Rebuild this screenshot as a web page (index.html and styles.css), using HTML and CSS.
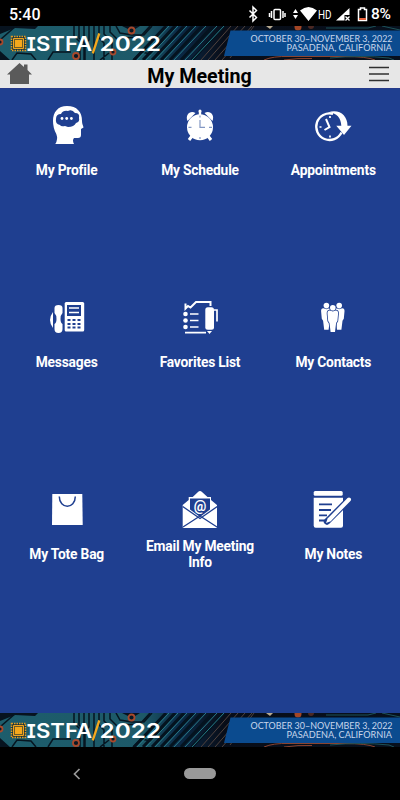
FILE: index.html
```
<!DOCTYPE html>
<html lang="en">
<head>
<meta charset="utf-8">
<title>My Meeting</title>
<link rel="stylesheet" href="styles.css">
</head>
<body>
<header class="status">
  <span class="time">5:40</span>
  <svg class="status-icons" viewBox="0 0 122 27" width="122" height="27">
    <path d="M1.500 9.500l7 7-3.500 3.500V6l3.500 3.500-7 7" fill="none" stroke="#fff" stroke-width="1.500"/>
    <g fill="none" stroke="#fff" stroke-width="1.500"><rect x="26" y="8.500" width="6.500" height="10" rx="1"/><path d="M23.500 10v7M21.500 12v4M35 10v7M37 12v4"/></g>
    <path d="M45 12l2.500-4 2.500 4zM45 14l2.500 4 2.500-4zM52 9.500q8.500-7 17 0L60.500 20z" fill="#fff"/>
    <text x="70" y="17.500" class="hd" textLength="13.500" lengthAdjust="spacingAndGlyphs">HD</text>
    <path d="M88 19.500L101.500 7v7h-5v5.500z" fill="#fff"/><path d="M97.500 15.500l4 4m0-4l-4 4" stroke="#fff" stroke-width="1.300"/>
    <path d="M110.500 8.500h2V7h4v1.500h2v11h-8z" fill="none" stroke="#fff" stroke-width="1.500"/><path d="M111 17h7v2h-7z" fill="#e8623c"/>
  </svg>
  <span class="battery">8%</span>
</header>

<svg class="banner" viewBox="0 0 400 34" width="400" height="34" preserveAspectRatio="none">
  <defs>
    <linearGradient id="board" x2="1" y2="0">
      <stop offset="0" stop-color="#1d5d6c"/><stop offset=".36" stop-color="#1d5968"/><stop offset=".45" stop-color="#0a2845"/><stop offset=".56" stop-color="#080d18"/><stop offset="1" stop-color="#07101d"/>
    </linearGradient>
    <g id="banner-art">
      <path d="M0 0h400v34H0z" fill="url(#board)"/>
      <path d="M0 0h38l-3 3-20-1L0 8zM0 25l10 9H0zM122 0h18l-8 5z" fill="#07131f"/>
      <g fill="none" stroke="#061520" stroke-width="1.500">
        <path d="M74 0v10l6 6v18M79 0v12l6 6v16M84 0v34M89 0v14l-4 4v16M94 0v34M99 0v12l5 5v17M104 0v8l8 8v18M110 0v6l8 8M116 0l4 7 12 2h12l8-9M133 34l8-8 10 2 16-18 8-10M0 14l16-14M48 34l5-8h18M122 12l18-1 10-11M100 34l9-7M12 34l5-7 14 1 5 6"/>
      </g>
      <g fill="none" stroke="#04131f" stroke-width="3"><path d="M134 34l32-34M143 34l32-34M152 34l32-34M161 34l32-34M170 34l32-34M181 34l32-34M192 34l32-34"/></g>
      <g fill="none" stroke="#287b88" stroke-width="1"><path d="M137 34l32-34M146 34l32-34M155 34l32-34M164 34l32-34M174 34l32-34M185 34l32-34M192 34l32-34"/></g>
      <g fill="none" stroke="#51433e" stroke-width="1"><path d="M201 34l30-34M208 34l30-34M215 34l30-34M222 34l30-34M230 32l24-32"/></g>
      <path d="M264 34q9-4 25-3.500h55q23 0 31 3.500M284 34q14-2 28-1.500" fill="none" stroke="#8a4430"/>
      <path d="M330 32q31-3 59 0l5 2M326 2h42l8-2M382 0l18 4" fill="none" stroke="#1d5259"/>
      <path d="M266 0h7l-3 3z" fill="#b8aa91"/>
      <g fill="#091825" stroke="#a8492c" stroke-width="1.800"><circle cx="131.500" cy="4.500" r="3"/><circle cx="76" cy="30" r="3"/><circle cx="113" cy="26" r="2.500"/><circle cx="0" cy="16" r="2.500"/></g>
      <circle cx="298" cy="1" r="3.500" fill="#a34625"/><circle cx="311" cy="0" r="3" fill="#4b2823"/>
      <path d="M230.500 4.500H400V30H224z" fill="#0b4b8f"/>
      <path d="M11.500 10.500h14v14h-14z" fill="#17323b" stroke="#e59b22" stroke-width="1.500" stroke-dasharray="1.500 1"/>
      <path d="M13.500 12.500h10v10h-10z" fill="#6b5a28" stroke="#f0a51f"/><path d="M15 14h7v7h-7z" fill="#f5a81c"/>
      <path d="M92.800 27.300L99.300 7.300" stroke="#f5a81c" stroke-width="2.300"/>
      <g class="wordmark">
        <text x="26" y="24.700" class="mono" textLength="10.500" lengthAdjust="spacingAndGlyphs">I</text>
        <text x="36" y="24.700" textLength="56" lengthAdjust="spacingAndGlyphs">STFA</text>
        <text x="99.500" y="24.700" textLength="61.500" lengthAdjust="spacingAndGlyphs">2022</text>
      </g>
      <g class="event">
        <text x="250.500" y="15.500" textLength="142" lengthAdjust="spacingAndGlyphs">OCTOBER 30–NOVEMBER 3, 2022</text>
        <text x="286.500" y="25" textLength="105.500" lengthAdjust="spacingAndGlyphs">PASADENA, CALIFORNIA</text>
      </g>
    </g>
  </defs>
  <use href="#banner-art"/>
</svg>

<div class="titlebar">
  <svg width="26" height="24" viewBox="0 0 26 24"><path d="M0 12.500L12.500 1l4.500 4V2.500h3.500V8l4.500 4.500h-3V22H3v-9.500z" fill="#5a5a5a"/></svg>
  <h1>My Meeting</h1>
  <svg width="20" height="24" viewBox="0 0 20 24"><path d="M0 5.500h20M0 12h20M0 18.500h20" stroke="#303030" stroke-width="1.500"/></svg>
</div>

<main class="grid">
  <a class="tile">
    <svg class="icon" viewBox="0 0 44 44"><path d="M10.300 41q3-5 1-10Q8 25 8 18C8 9 13 3 22 3c10 0 15 6 15 15 0 3 1 4 1.500 6.500L36 26v6q0 3-3 3h-4q-2 2 0 6z" fill="#fff"/><path d="M15 22q-5-1-4-6 0-5 5-5 2-4 7-3 4-2 7 2 5 0 4 5 1 4-3 5-2 4-8 4l-3-1q-4 1-5-1z" fill="#1f3f90"/><g fill="#fff"><circle cx="17" cy="15.500" r="1.400"/><circle cx="21.700" cy="15.500" r="1.400"/><circle cx="26.400" cy="15.500" r="1.400"/></g></svg>
    <span class="label">My Profile</span>
  </a>
  <a class="tile">
    <svg class="icon" viewBox="0 0 44 44"><g fill="#fff"><circle cx="22" cy="24.300" r="13"/><path d="M9.500 18C7 12 12 7 17.500 10zM34.500 18C37 12 32 7 26.500 10zM20.800 8h2.400v4h-2.400z"/><circle cx="22" cy="8" r="1.500"/><path d="M14 33l-3 4M30 33l3 4" stroke="#fff" stroke-width="3"/></g><path d="M22 17v7.300h5M22 12.500v2M22 34v2M10.500 24.300h3M31 24.300h3" fill="none" stroke="#8297c3" stroke-width="1.200"/></svg>
    <span class="label">My Schedule</span>
  </a>
  <a class="tile">
    <svg class="icon" viewBox="0 0 44 44"><path d="M22 10.800a13.300 13.300 0 1 0 8.500 18.700" fill="none" stroke="#fff" stroke-width="2.300"/><path d="M17 9.500c11-4 19.500 3 19.500 13.200h4L33 32l-7.700-9.300h5C30 15 26 9.500 17 9.500z" fill="#fff"/><path d="M15 16l3.500 8-5 3" fill="none" stroke="#fff" stroke-width="2"/><path d="M19 13v2M19 32.500v2M8.500 24h2" stroke="#fff" stroke-width="1.700"/></svg>
    <span class="label">Appointments</span>
  </a>
  <a class="tile">
    <svg class="icon" viewBox="0 0 44 44"><rect x="19.700" y="7" width="19.500" height="29.500" rx="1.500" fill="#fff"/><path d="M22 10h14v11H22z" fill="#1f3f90"/><path d="M24 13h10M24 17.500h10" stroke="#fff" stroke-width="1.500"/><path d="M22.500 25h13M22.500 29h13M22.500 32.500h13" stroke="#1f3f90" stroke-width="2" stroke-dasharray="3 2"/><path d="M9.500 13q0-3 4-3t4 3v5q-2 2-2 6t2 5v5q0 4-4 4t-4-4v-5q2-1 2-5t-2-6z" fill="#fff"/><path d="M8 17v16q-6-8 0-16z" fill="#fff"/></svg>
    <span class="label">Messages</span>
  </a>
  <a class="tile">
    <svg class="icon" viewBox="0 0 44 44"><path d="M7.500 8.500v5l2.500-2.500 2.500 1.500L18 7h14.500v4" fill="none" stroke="#fff" stroke-width="2"/><g fill="#fff"><circle cx="7.500" cy="19" r="2.300"/><circle cx="7.500" cy="25.500" r="2.300"/><circle cx="7.500" cy="32" r="2.300"/><rect x="27.300" y="12.300" width="8.700" height="22.500" rx="2.500"/><path d="M29 36h5l-2.500 3z"/></g><path d="M12 19h8.500M12 25.500h8.500M12 32h8.500M7 37.700h21M36 15h3v11.500" fill="none" stroke="#fff" stroke-width="1.700"/></svg>
    <span class="label">Favorites List</span>
  </a>
  <a class="tile">
    <svg class="icon" viewBox="0 0 44 44"><defs><g id="person"><circle cy="-8.700" r="2.800"/><path d="M-3-6L0-5l3-1q2.500 0 2.300 3L4.600 4.500 3.300 6.500 2.200 15.500h-4.400L-3.300 6.500-4.600 4.500-5.300-3Q-5.500-6-3-6z"/></g></defs><g fill="#fff"><use href="#person" x="15.400" y="19.300"/><use href="#person" x="28.200" y="19.300"/><use href="#person" x="21.800" y="21.500" stroke="#1f3f90" stroke-width="1.600"/><use href="#person" x="21.800" y="21.500"/></g></svg>
    <span class="label">My Contacts</span>
  </a>
  <a class="tile">
    <svg class="icon" viewBox="0 0 44 44"><path d="M7.300 7h30l.4 31H7z" fill="#fff"/><path d="M14.300 9.500c0 13 16 13 16 0" fill="none" stroke="#1f3f90" stroke-width="1.500"/></svg>
    <span class="label">My Tote Bag</span>
  </a>
  <a class="tile">
    <svg class="icon" viewBox="0 0 44 44"><path d="M4.700 18l6-5V10h4L20 5q2-2 4 0l5.500 5H33v3l6 5v22q0 1-1 1H5.700q-1 0-1-1z" fill="#fff"/><path d="M12 11.500h20v11L22 30l-10-7.500z" fill="#1f3f90"/><text x="22" y="23.500" class="at">@</text><path d="M4.700 19.500L22 31.500l17.300-12M5 40l17-11 17 11" fill="none" stroke="#1f3f90" stroke-width="1.300"/></svg>
    <span class="label">Email My Meeting<br>Info</span>
  </a>
  <a class="tile">
    <svg class="icon" viewBox="0 0 44 44"><g fill="#fff"><rect x="2.700" y="4" width="29" height="4.700" rx="1.500"/><path d="M2.700 10.700H32v28q0 2-2 2H4.700q-2 0-2-2z"/></g><path d="M8 17.300h13M8 23h12M8 28.300h8M8 33.500h7" stroke="#1f3f90" stroke-width="1.800"/><path d="M38 12.500L19 31.500l-3 3" fill="none" stroke="#1f3f90" stroke-width="6.500" stroke-linecap="round"/><path d="M38 12.500L19 32" stroke="#fff" stroke-width="4" stroke-linecap="round"/><path d="M17 30.500l-2 5.500 5.500-2z" fill="#fff"/></svg>
    <span class="label">My Notes</span>
  </a>
</main>

<svg class="banner" viewBox="0 0 400 34" width="400" height="34"><use href="#banner-art"/></svg>
<nav class="navbar">
  <svg width="8" height="12" viewBox="0 0 8 12"><path d="M6.500 1L1.500 6l5 5" fill="none" stroke="#999" stroke-width="1.700"/></svg>
  <span class="pill"></span>
</nav>
</body>
</html>
```
FILE: styles.css
```
* { box-sizing: border-box; }
body {
  margin: 0;
  width: 400px;
  height: 800px;
  display: flex;
  flex-direction: column;
  overflow: hidden;
  background: #000;
  font-family: Roboto, "Liberation Sans", sans-serif;
}
.status {
  height: 26px;
  flex: none;
  display: flex;
  align-items: center;
  padding: 2px 9px 0;
  color: #fff;
  font-size: 16px;
  font-weight: 500;
}
.time { flex: 1; }
.status-icons { display: block; margin-right: 1px; }
.hd { fill: #fff; font-size: 13px; font-weight: 400; }
.battery { width: 20px; font-size: 15.500px; white-space: nowrap; letter-spacing: -.3px; }
.banner { display: block; flex: none; }
.wordmark { fill: #fff; font: 600 20px Inter, "DejaVu Sans", sans-serif; }
.wordmark .mono { font-family: "DejaVu Sans Mono", monospace; font-weight: 700; }
.event { fill: #c8d6eb; font: 8.500px Lato, "Open Sans", sans-serif; }
.titlebar {
  height: 28px;
  flex: none;
  display: flex;
  align-items: center;
  justify-content: space-between;
  padding: 0 11px 0 7px;
  background: #e7e7e7;
}
.titlebar h1 {
  margin: 5px 0 0 -3px;
  font-size: 19.700px;
  line-height: 24px;
  font-weight: 700;
  color: #000;
}
.grid {
  height: 625px;
  flex: none;
  display: grid;
  grid-template-columns: repeat(3, 1fr);
  grid-template-rows: repeat(3, 192px);
  background: #1f3f90;
  border-top: 1px solid #263a8a;
}
.tile {
  display: flex;
  flex-direction: column;
  align-items: center;
  padding-top: 14px;
  color: #fff;
}
.icon { width: 44px; height: 44px; flex: none; }
.label {
  height: 32px;
  margin-top: 7px;
  display: flex;
  align-items: center;
  text-align: center;
  font-size: 13.800px;
  line-height: 16px;
  font-weight: 700;
  letter-spacing: -.2px;
  white-space: nowrap;
}
.at { fill: #fff; font: bold 14px Roboto, sans-serif; text-anchor: middle; }
.navbar {
  flex: 1;
  display: grid;
  grid-template-columns: 73px 111px 1fr;
  align-items: center;
}
.navbar svg { grid-column: 2; }
.pill {
  width: 32px;
  height: 11px;
  border-radius: 6px;
  background: #999;
}
```
